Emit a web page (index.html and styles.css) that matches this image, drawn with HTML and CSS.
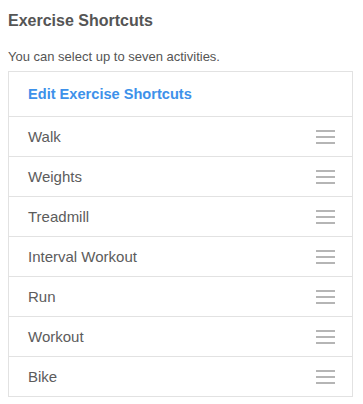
FILE: index.html
```html
<!DOCTYPE html>
<html lang="en">

<head>
    <meta charset="UTF-8">
    <meta name="viewport" content="width=device-width, initial-scale=1.0">
    <title>Exercise Shortcuts</title>
    <link rel="stylesheet" href="styles.css">
</head>

<body>
    <div class="page">
        <h1 class="title">Exercise Shortcuts</h1>
        <p class="hint">You can select up to seven activities.</p>
        <div class="list">
            <div class="edit">Edit Exercise Shortcuts</div>
            <div class="item"><span>Walk</span><i class="handle"><b></b><b></b><b></b></i></div>
            <div class="item"><span>Weights</span><i class="handle"><b></b><b></b><b></b></i></div>
            <div class="item"><span>Treadmill</span><i class="handle"><b></b><b></b><b></b></i></div>
            <div class="item"><span>Interval Workout</span><i class="handle"><b></b><b></b><b></b></i></div>
            <div class="item"><span>Run</span><i class="handle"><b></b><b></b><b></b></i></div>
            <div class="item"><span>Workout</span><i class="handle"><b></b><b></b><b></b></i></div>
            <div class="item"><span>Bike</span><i class="handle"><b></b><b></b><b></b></i></div>
        </div>
    </div>
</body>

</html>
```

FILE: styles.css
```css
* {
    padding: 0;
    margin: 0;
    box-sizing: border-box;
}

body {
    background-color: #fff;
    font-family: "Liberation Sans", Arial, sans-serif;
    color: #555;
}

.page {
    padding: 11px 0 0 8px;
}

.title {
    font-size: 16px;
    line-height: 20px;
    font-weight: bold;
    color: #555;
}

.hint {
    margin-top: 18px;
    font-size: 13px;
    line-height: 16px;
    color: #555;
}

.list {
    width: 345px;
    margin-top: 6px;
    border: 1px solid #e2e2e2;
}

.edit {
    height: 45px;
    display: flex;
    align-items: center;
    padding-left: 19px;
    font-size: 14.6px;
    font-weight: bold;
    color: #3d91ea;
    border-bottom: 1px solid #e2e2e2;
}

.item {
    height: 40px;
    display: flex;
    align-items: center;
    justify-content: space-between;
    padding: 0 17px 0 19px;
    font-size: 15px;
    color: #5c5c5c;
    border-bottom: 1px solid #e2e2e2;
}

.item:last-child {
    height: 39px;
    border-bottom: none;
}

.handle {
    width: 19px;
    display: flex;
    flex-direction: column;
    gap: 4px;
    margin-top: 1px;
}

.handle b {
    display: block;
    height: 2px;
    background-color: #b5b5b5;
}
```
